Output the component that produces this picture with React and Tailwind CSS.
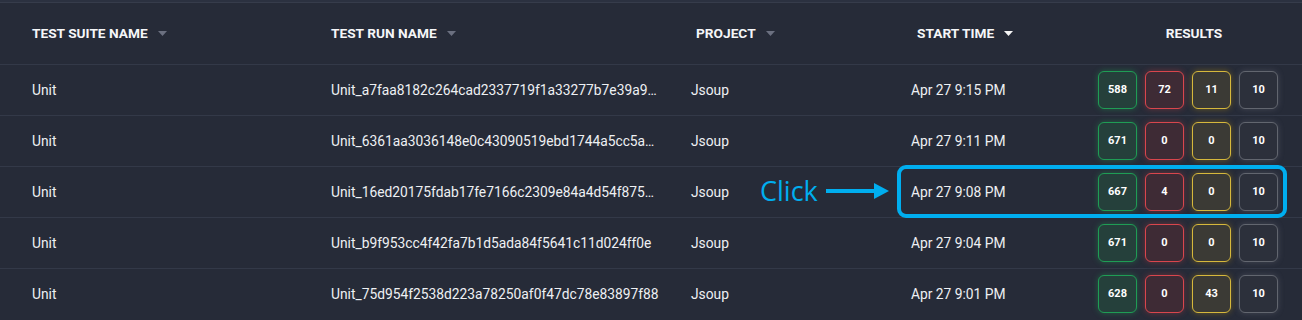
import React from 'react'

const rows = [
  { suite: 'Unit', run: 'Unit_a7faa8182c264cad2337719f1a33277b7e39a9c41d7e', project: 'Jsoup', time: 'Apr 27 9:15 PM', results: [588, 72, 11, 10] },
  { suite: 'Unit', run: 'Unit_6361aa3036148e0c43090519ebd1744a5cc5a7e21f0b', project: 'Jsoup', time: 'Apr 27 9:11 PM', results: [671, 0, 0, 10] },
  { suite: 'Unit', run: 'Unit_16ed20175fdab17fe7166c2309e84a4d54f875b0c3a9', project: 'Jsoup', time: 'Apr 27 9:08 PM', results: [667, 4, 0, 10] },
  { suite: 'Unit', run: 'Unit_b9f953cc4f42fa7b1d5ada84f5641c11d024ff0e', project: 'Jsoup', time: 'Apr 27 9:04 PM', results: [671, 0, 0, 10] },
  { suite: 'Unit', run: 'Unit_75d954f2538d223a78250af0f47dc78e83897f88', project: 'Jsoup', time: 'Apr 27 9:01 PM', results: [628, 0, 43, 10] },
]

const badgeStyles = [
  'border-[#1f9d55] bg-[#25403b] shadow-[0_0_6px_rgba(34,197,94,0.35)]',
  'border-[#d9464d] bg-[#3e2b35] shadow-[0_0_6px_rgba(239,68,68,0.35)]',
  'border-[#d6b83c] bg-[#3b3a35] shadow-[0_0_6px_rgba(234,179,8,0.35)]',
  'border-[#62666f] bg-[#2c303b] shadow-[0_0_6px_rgba(160,160,170,0.25)]',
]

function Caret({ active }) {
  return (
    <svg width="9" height="5" viewBox="0 0 9 5" className="ml-2.5 mt-[1px]">
      <path d="M0 0 L9 0 L4.5 5 Z" fill={active ? '#f5f5f5' : '#6b7080'} />
    </svg>
  )
}

function HeaderCell({ label, sort, active, className = '' }) {
  return (
    <div className={`flex items-center text-[13.7px] font-bold text-[#f5f6f8] ${className}`}>
      <span>{label}</span>
      {sort && <Caret active={active} />}
    </div>
  )
}

export default function App() {
  return (
    <div className="relative h-[320px] w-[1302px] overflow-hidden bg-[#262b38] font-['Roboto',sans-serif] text-[#eef0f3]">
      <div className="h-[3px] border-b border-[#363c4b] bg-[#2b3140]" />

      {/* Header */}
      <div className="grid h-[61px] grid-cols-[32px_299px_360px_220px_187px_1fr] items-center">
        <div />
        <HeaderCell label="TEST SUITE NAME" sort />
        <HeaderCell label="TEST RUN NAME" sort />
        <HeaderCell label="PROJECT" sort className="pl-[5px]" />
        <HeaderCell label="START TIME" sort active className="pl-[6px]" />
        <HeaderCell label="RESULTS" className="justify-center pr-[12px]" />
      </div>

      {/* Rows */}
      {rows.map((row, i) => (
        <div key={i} className="grid h-[51px] grid-cols-[32px_299px_360px_220px_187px_1fr] items-center border-t border-[#333948] text-[13.8px]">
          <div />
          <div>{row.suite}</div>
          <div className="w-[330px] truncate">{row.run}</div>
          <div>{row.project}</div>
          <div>{row.time}</div>
          <div className="flex gap-[8px]">
            {row.results.map((n, j) => (
              <div
                key={j}
                className={`flex h-[38px] w-[39px] items-center justify-center rounded-[6px] border-[1.5px] text-[11px] font-bold text-white ${badgeStyles[j]}`}
              >
                {n}
              </div>
            ))}
          </div>
        </div>
      ))}

      {/* Click annotation */}
      <div className="absolute left-[760px] top-[174px] flex items-center">
        <span className="font-['Open_Sans',sans-serif] text-[27px] leading-[34px] text-[#00aeef]">Click</span>
        <svg width="63" height="16" viewBox="0 0 63 16" className="ml-[8px]">
          <rect x="0" y="6" width="50" height="4" fill="#00aeef" />
          <path d="M48 0 L63 8 L48 16 Z" fill="#00aeef" />
        </svg>
      </div>
      <div className="absolute left-[897px] top-[165px] h-[53px] w-[390px] rounded-[9px] border-[4px] border-[#00aeef]" />
    </div>
  )
}
